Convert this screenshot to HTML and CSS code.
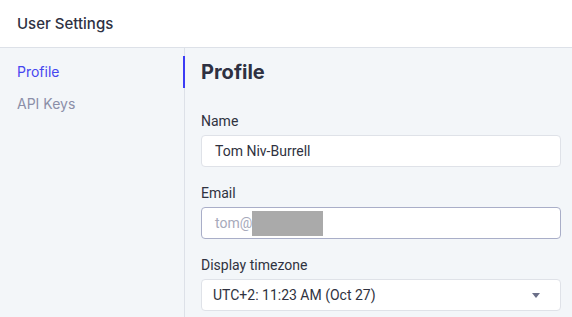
FILE: index.html
```html
<!DOCTYPE html>
<html>
<head>
    <title>User Settings</title>
    <link rel="stylesheet" href="styles.css">
</head>
<body>
    <header class="topbar">User Settings</header>

    <div class="layout">
        <nav class="sidebar">
            <a class="nav-item active">Profile</a>
            <a class="nav-item">API Keys</a>
        </nav>

        <main class="content">
            <h2>Profile</h2>

            <div class="field">
                <label>Name</label>
                <div class="input">Tom Niv-Burrell</div>
            </div>

            <div class="field">
                <label>Email</label>
                <div class="input focused">
                    <span class="placeholder">tom@</span><span class="redacted"></span>
                </div>
            </div>

            <div class="field">
                <label>Display timezone</label>
                <div class="input select">
                    <span>UTC+2: 11:23 AM (Oct 27)</span>
                    <span class="caret"></span>
                </div>
            </div>
        </main>
    </div>
</body>
</html>
```

FILE: styles.css
```css
body {
    margin: 0;
    height: 100vh;
    overflow: hidden;
    background: #f3f6f9;
    font-family: 'Inter', sans-serif;
    color: #2e3142;
}

.topbar {
    height: 48px;
    box-sizing: border-box;
    padding-left: 17px;
    display: flex;
    align-items: center;
    background: #fff;
    border-bottom: 1px solid #dde1e8;
    font-size: 15px;
    font-weight: 500;
    color: #2e3142;
}

.layout {
    display: flex;
    height: calc(100vh - 48px);
}

.sidebar {
    width: 184px;
    flex-shrink: 0;
    padding-top: 8px;
    border-right: 1px solid #dde1e8;
    display: flex;
    flex-direction: column;
}

.nav-item {
    position: relative;
    height: 32px;
    line-height: 32px;
    padding-left: 17px;
    font-size: 14px;
    color: #8b8fa8;
}

.nav-item.active {
    color: #4646f0;
}

/* active marker sits on the sidebar border */
.nav-item.active::after {
    content: '';
    position: absolute;
    right: -1px;
    top: 0;
    width: 2px;
    height: 32px;
    background: #3c3cf5;
}

.content {
    flex: 1;
    padding: 8px 11px 0 16px;
}

.content h2 {
    margin: 0 0 23px;
    height: 32px;
    line-height: 32px;
    font-size: 20px;
    font-weight: 700;
    color: #2e3142;
}

.field {
    margin-bottom: 16px;
    font-family: 'Roboto', sans-serif;
}

.field label {
    display: block;
    height: 20px;
    line-height: 20px;
    margin-bottom: 4px;
    font-size: 14px;
    color: #2f3240;
}

.input {
    height: 32px;
    box-sizing: border-box;
    display: flex;
    align-items: center;
    padding-left: 13px;
    background: #fff;
    border: 1px solid #dfe2e8;
    border-radius: 4px;
    font-size: 14px;
    color: #2f3240;
}

.input.focused {
    border-color: #a9aec8;
}

.placeholder {
    color: #a7aabb;
}

.redacted {
    width: 71px;
    height: 25px;
    background: #aaaaaa;
}

.select {
    padding-left: 11px;
    padding-right: 20px;
    justify-content: space-between;
}

.caret {
    width: 0;
    height: 0;
    border-left: 4px solid transparent;
    border-right: 4px solid transparent;
    border-top: 5px solid #6b6f88;
}
```
